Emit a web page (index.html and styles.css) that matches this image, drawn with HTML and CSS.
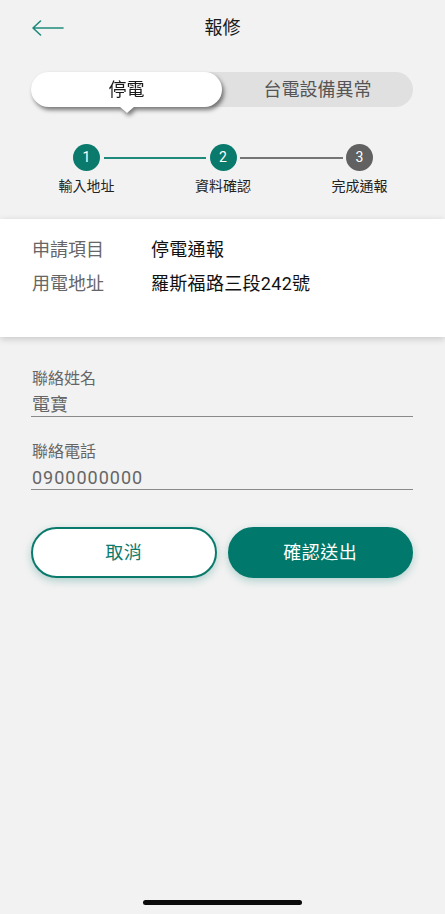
FILE: index.html
```html
<!DOCTYPE html>
<html lang="zh-Hant">
<head>
<meta charset="utf-8">
<title>報修</title>
<link rel="stylesheet" href="styles.css">
</head>
<body>
<div class="screen">
  <header class="topbar">
    <a class="back" aria-label="返回">
      <svg width="32" height="16" viewBox="0 0 32 16" fill="none" stroke="#1f8a7c" stroke-width="1.6" stroke-linecap="round" stroke-linejoin="round"><path d="M1 8H31M8.5 1L1 8L8.5 15"/></svg>
    </a>
    <h1 class="title">報修</h1>
    <span class="spacer"></span>
  </header>

  <div class="segment">
    <div class="seg-item seg-active">停電</div>
    <div class="seg-item seg-inactive">台電設備異常</div>
  </div>

  <div class="steps">
    <div class="step">
      <span class="dot dot-done">1</span>
      <span class="step-label">輸入地址</span>
    </div>
    <span class="line line-done"></span>
    <div class="step">
      <span class="dot dot-done">2</span>
      <span class="step-label">資料確認</span>
    </div>
    <span class="line line-todo"></span>
    <div class="step">
      <span class="dot dot-todo">3</span>
      <span class="step-label">完成通報</span>
    </div>
  </div>

  <section class="card">
    <div class="row"><span class="row-label">申請項目</span><span class="row-value">停電通報</span></div>
    <div class="row"><span class="row-label">用電地址</span><span class="row-value">羅斯福路三段242號</span></div>
  </section>

  <div class="form">
    <div class="field">
      <span class="field-label">聯絡姓名</span>
      <span class="field-value">電寶</span>
    </div>
    <div class="field">
      <span class="field-label">聯絡電話</span>
      <span class="field-value digits">0900000000</span>
    </div>
  </div>

  <div class="actions">
    <button class="btn btn-outline">取消</button>
    <button class="btn btn-solid">確認送出</button>
  </div>

  <div class="home"><span class="home-bar"></span></div>
</div>
</body>
</html>
```

FILE: styles.css
```css
* { box-sizing: border-box; }
html, body { margin: 0; padding: 0; }
body {
  background: #f2f2f2;
  font-family: Roboto, "Noto Sans CJK TC", "Noto Sans", sans-serif;
  color: #222;
}
.screen {
  width: 445px;
  height: 914px;
  background: #f2f2f2;
  display: flex;
  flex-direction: column;
  overflow: hidden;
}

/* header */
.topbar {
  height: 56px;
  display: grid;
  grid-template-columns: 1fr auto 1fr;
  align-items: center;
  padding: 0 32px;
}
.back { display: flex; align-items: center; height: 16px; }
.back svg { display: block; }
.title {
  margin: 0;
  font-size: 18px;
  font-weight: 400;
  line-height: 24px;
  color: #1a1a1a;
}

/* segmented control */
.segment {
  margin: 16px 32px 0 31px;
  height: 35px;
  background: #e0e0e0;
  border-radius: 18px;
  display: flex;
}
.seg-item {
  display: flex;
  align-items: center;
  justify-content: center;
  font-size: 18px;
  line-height: 24px;
}
.seg-active {
  position: relative;
  width: 191px;
  background: #fff;
  border-radius: 18px;
  color: #1a1a1a;
  filter: drop-shadow(2px 3px 2px rgba(0,0,0,0.5));
}
.seg-active::after {
  content: "";
  position: absolute;
  left: 50%;
  bottom: -6px;
  margin-left: -8px;
  border-left: 8px solid transparent;
  border-right: 8px solid transparent;
  border-top: 7px solid #fff;
}
.seg-inactive {
  flex: 1;
  color: #555;
}

/* steps */
.steps {
  margin-top: 37px;
  padding: 0 72px 0 73px;
  display: flex;
  align-items: flex-start;
}
.step {
  width: 27px;
  display: flex;
  flex-direction: column;
  align-items: center;
}
.dot {
  width: 27px;
  height: 27px;
  border-radius: 50%;
  color: #fff;
  font-size: 14px;
  line-height: 27px;
  text-align: center;
}
.dot-done { background: #0a7a6c; }
.dot-todo { background: #616161; }
.step-label {
  margin-top: 6px;
  white-space: nowrap;
  font-size: 14px;
  line-height: 18px;
  color: #222;
}
.line {
  flex: 1;
  height: 1.5px;
  margin: 13px 3.5px 0;
}
.line-done { background: #1f8a7c; }
.line-todo { background: #757575; }

/* card */
.card {
  margin-top: 24px;
  height: 118px;
  background: #fff;
  box-shadow: 0 2px 7px rgba(0,0,0,0.18);
  padding: 19px 32px 0;
  display: flex;
  flex-direction: column;
  gap: 10px;
}
.row {
  display: flex;
  font-size: 18px;
  line-height: 24px;
}
.row-label { width: 119px; color: #666; }
.row-value { color: #111; letter-spacing: 0.3px; }

/* form */
.form {
  margin: 32px 32px 0 31px;
  display: flex;
  flex-direction: column;
  gap: 25px;
}
.field {
  display: flex;
  flex-direction: column;
  border-bottom: 1.5px solid #8a8a8a;
}
.field-label {
  font-size: 16px;
  line-height: 20px;
  color: #666;
  padding-left: 1px;
}
.field-value {
  margin-top: 5px;
  font-size: 18px;
  line-height: 22px;
  color: #666;
  padding-left: 1px;
}
.digits { letter-spacing: 1px; }

/* buttons */
.actions {
  margin: 37px 32px 0 31px;
  display: flex;
  gap: 11px;
}
.btn {
  flex: 1;
  height: 51px;
  border-radius: 26px;
  font-family: inherit;
  font-size: 18px;
  line-height: 24px;
  letter-spacing: 0.5px;
  box-shadow: 0 3px 8px rgba(0,121,107,0.28);
  cursor: pointer;
}
.btn-outline {
  background: #fff;
  border: 2px solid #0a7a6c;
  color: #0a7a6c;
}
.btn-solid {
  background: #00786b;
  border: 2px solid #00786b;
  color: #fff;
}

/* home indicator */
.home {
  margin-top: auto;
  padding-bottom: 9px;
  display: flex;
  justify-content: center;
}
.home-bar {
  width: 159px;
  height: 5px;
  border-radius: 3px;
  background: #0a0a0a;
}
```
